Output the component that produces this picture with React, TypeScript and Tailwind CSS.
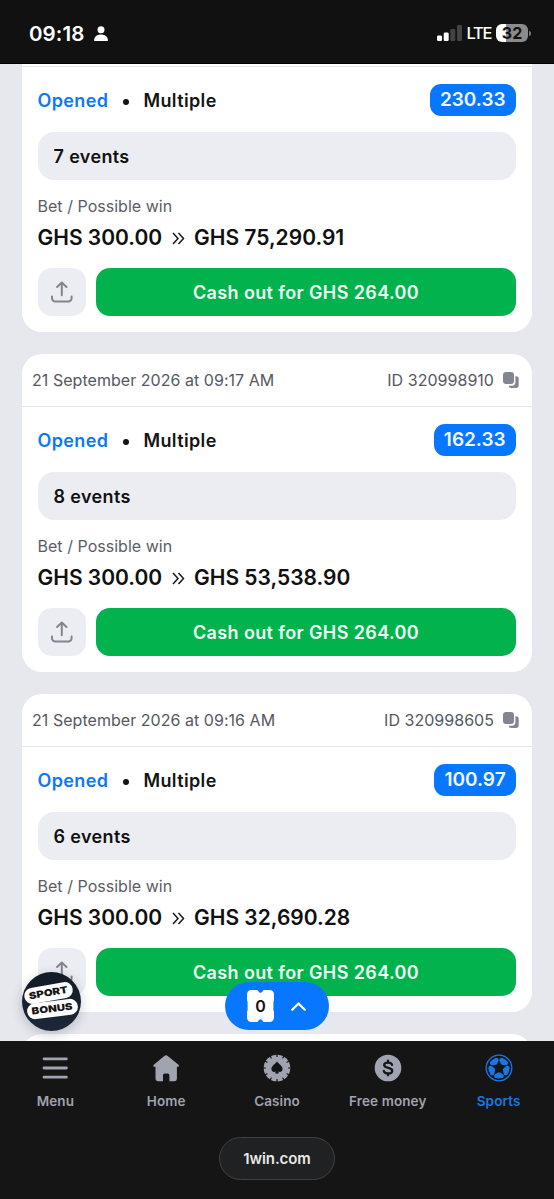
import type { ReactNode } from 'react';

type Bet = {
  date?: string;
  id?: string;
  odds: string;
  oddsWidth: string;
  events: string;
  win: string;
};

const bets: Bet[] = [
  { odds: '230.33', oddsWidth: 'w-[86.5px]', events: '7 events', win: 'GHS 75,290.91' },
  { date: '21 September 2026 at 09:17 AM', id: '320998910', odds: '162.33', oddsWidth: 'w-[82.5px]', events: '8 events', win: 'GHS 53,538.90' },
  { date: '21 September 2026 at 09:16 AM', id: '320998605', odds: '100.97', oddsWidth: 'w-[82px]', events: '6 events', win: 'GHS 32,690.28' },
];

function CopyIcon() {
  return (
    <svg className="h-4 w-4" viewBox="0 0 16 16" fill="#838691">
      <rect x="0" y="0" width="11" height="12" rx="3" />
      <path d="M12.4 4.2H13a2.7 2.7 0 0 1 2.7 2.7v6.4A2.7 2.7 0 0 1 13 16H8.2a2.7 2.7 0 0 1-2.6-2.3h3.2a3.6 3.6 0 0 0 3.6-3.6z" />
    </svg>
  );
}

function ShareIcon() {
  return (
    <svg className="h-6 w-6" viewBox="0 0 24 24" fill="none" stroke="#82848f" strokeWidth="2" strokeLinecap="round" strokeLinejoin="round">
      <path d="M11.8 15.2V2.800M7.100 7 11.800 2.500 16.500 7M2 16.400v1.800a3.300 3.300 0 0 0 3.300 3.300h13a3.300 3.300 0 0 0 3.300-3.300v-1.800" />
    </svg>
  );
}

function BetCard({ bet }: { bet: Bet }) {
  return (
    <article className={`${bet.id ? 'h-[318px]' : 'h-[268px]'} shrink-0 overflow-hidden bg-white ${bet.id ? 'rounded-[20px]' : 'rounded-b-[20px]'}`}>
      {bet.id ? (
        <header className="flex h-[53px] items-center justify-between border-b border-[#e6e7ec] pl-[10.5px] pr-[13.5px] text-[16px] text-[#55585f]">
          <span className="whitespace-nowrap tracking-[0.04px]">{bet.date}</span>
          <span className="flex items-center gap-[8.5px] whitespace-nowrap">
            <span className="tracking-[0.03px]">ID {bet.id}</span>
            <CopyIcon />
          </span>
        </header>
      ) : (
        <div className="h-[3px] border-b border-[#e6e7ec]" />
      )}
      <div className="px-4 pt-[17px]">
        <div className="flex h-8 items-center justify-between">
          <div className="mt-px flex items-center text-[18px] font-semibold tracking-[0.36px] text-[#141414]">
            <span className="w-[70px] text-[#0d77f5]">Opened</span>
            <span className="ml-[15px] mr-[15px] mt-0.5 h-1.5 w-1.5 rounded-full bg-[#141414]" />
            <span>Multiple</span>
          </div>
          <span className={`${bet.oddsWidth} flex h-8 items-center justify-center rounded-[11px] bg-[#0877ff] text-[19px] font-semibold text-[#f2f7ff]`}>{bet.odds}</span>
        </div>
        <div className="mt-4 flex h-12 items-center rounded-[16px] bg-[#ecedf2] px-4 text-[18px] font-semibold tracking-[0.36px] text-[#111]">{bet.events}</div>
        <p className="mt-[15px] h-[22px] whitespace-nowrap text-[16px] leading-[22px] tracking-[0.03px] text-[#5b5d64]">Bet / Possible win</p>
        <div className="mt-[7px] flex h-7 items-center whitespace-nowrap text-[21px] font-semibold text-[#101010]">
          <span className="w-[125px]">GHS 300.00</span>
          <svg className="ml-[9px] mr-[9.5px] h-[13px] w-[13px]" viewBox="0 0 13 13" fill="none" stroke="#18191b" strokeWidth="1.5">
            <path d="m1 1 5 5.5-5 5.5M6.5 1l5 5.5-5 5.5" />
          </svg>
          <span>{bet.win}</span>
        </div>
        <div className="mt-4 flex gap-[10.5px]">
          <button className="flex h-12 w-12 items-center justify-center rounded-[14px] bg-[#ecedf2]"><ShareIcon /></button>
          <button className="h-12 flex-1 rounded-[14px] bg-[#02b34d] text-[18px] font-semibold tracking-[0.38px] text-[#f0fff5]">Cash out for GHS 264.00</button>
        </div>
      </div>
    </article>
  );
}

function StatusBar() {
  return (
    <div className="z-10 flex h-16 shrink-0 items-center justify-between border-b border-black bg-[#111] pl-[29px] pr-[23px] pt-[3px] text-white">
      <div className="flex items-center gap-[7px]">
        <span className="w-[58px] pt-px text-[20.5px] font-semibold leading-6 tracking-[0.1px]">09:18</span>
        <svg className="h-[15px] w-[14px]" viewBox="0 0 14 15" fill="white">
          <circle cx="7" cy="3.7" r="3.5" />
          <path d="M0 14.2C.4 10.5 3 8.4 7 8.4s6.6 2.1 7 5.8c0 .5-.3.8-.8.8H.8c-.5 0-.8-.3-.8-.8Z" />
        </svg>
      </div>
      <div className="flex items-center">
        <svg className="h-4 w-[25px]" viewBox="0 0 25 16">
          <rect x="0" y="10.5" width="5" height="5.5" rx="1.3" fill="white" />
          <rect x="6.7" y="7.5" width="5" height="8.5" rx="1.3" fill="white" />
          <rect x="13.3" y="4" width="5" height="12" rx="1.3" fill="#434345" />
          <rect x="20" y="0" width="5" height="16" rx="1.3" fill="#434345" />
        </svg>
        <span className="ml-[4.5px] w-[25px] whitespace-nowrap text-[16.5px] font-medium leading-5 tracking-[-1.3px]">LTE</span>
        <div className="ml-[4.5px] flex h-[18px] w-8 items-center justify-center rounded-[6px] bg-linear-to-r from-white from-32% to-[#8b8b8d] to-32% text-[16px] font-bold leading-[18px] text-[#111]">32</div>
        <span className="ml-px h-[5px] w-[2px] rounded-r-full bg-[#77777a]" />
      </div>
    </div>
  );
}

function MenuIcon() {
  return (
    <svg className="h-7 w-7" viewBox="0 0 28 28" stroke="currentColor" strokeWidth="2.8" strokeLinecap="round">
      <path d="M3 4.8h22.4M3 14h22.4M3 23.2h22.4" />
    </svg>
  );
}

function HomeIcon() {
  return (
    <svg className="h-7 w-7" viewBox="0 0 28 28" fill="currentColor">
      <path d="M12.3 1.9a2.7 2.7 0 0 1 3.4 0l10.8 8.9c.7.6.7 1.2.2 1.7-.5.6-1.2.5-1.8.1v11.9a2.8 2.8 0 0 1-2.8 2.8h-4.7v-6a1.8 1.8 0 0 0-1.8-1.8h-2.8a1.8 1.8 0 0 0-1.8 1.8v6H6.3a2.8 2.8 0 0 1-2.8-2.8V12.6c-.7.4-1.4.5-1.9-.1-.5-.5-.5-1.1.2-1.7z" />
    </svg>
  );
}

const notches = [0, 30, 60, 90, 120, 150, 180, 210, 240, 270, 300, 330];

function CasinoIcon() {
  return (
    <svg className="h-7 w-7" viewBox="0 0 28 28">
      <circle cx="14" cy="14" r="13.3" fill="currentColor" />
      {notches.map((angle) => (
        <rect key={angle} x="13.4" y="0" width="1.2" height="3" rx="0.6" fill="#151515" transform={`rotate(${angle} 14 14)`} />
      ))}
      <path d="M14 7.6c1.2 2 5.6 4.3 5.6 7.5 0 2.4-2.4 3.7-4.4 2.5l.6 1.2c.2.4 0 .7-.4.7h-2.8c-.4 0-.6-.3-.4-.7l.6-1.2c-2 1.2-4.4-.1-4.4-2.5 0-3.2 4.4-5.5 5.6-7.5Z" fill="#151515" />
    </svg>
  );
}

function MoneyIcon() {
  return (
    <svg className="h-7 w-7" viewBox="0 0 28 28">
      <circle cx="14" cy="14" r="13.3" fill="currentColor" />
      <path d="M18 10.8c-.4-1.4-1.8-2.2-4-2.2-2.3 0-3.8.9-3.8 2.5 0 3.9 8 1.8 8 5.6 0 1.7-1.7 2.8-4.1 2.8-2.3 0-3.9-1-4.3-2.5M14 6.7v1.6M14 19.7v1.6" fill="none" stroke="#151515" strokeWidth="2.3" strokeLinecap="round" />
    </svg>
  );
}

const panels = [0, 72, 144, 216, 288];

function BallIcon() {
  return (
    <svg className="h-7 w-7" viewBox="0 0 28 28">
      <circle cx="14" cy="14" r="12.8" fill="none" stroke="currentColor" strokeWidth="1.3" />
      {panels.map((angle) => (
        <path key={angle} d="m12.6 9.3-2.7-1.700c-.700-.500-.900-1.100-.700-1.900l.200-.700c.200-.700.600-1 1.300-1.100a12 12 0 0 1 6.600 0c.700.100 1.100.400 1.300 1.100l.200.700c.200.800 0 1.400-.700 1.900l-2.700 1.700c-1 .700-1.800.700-2.800 0Z" fill="currentColor" transform={`rotate(${angle + 36} 14 14)`} />
      ))}
      <path d="m14 9.5 4.400 3.200-1.700 5.100h-5.400l-1.700-5.100z" fill="#151515" />
    </svg>
  );
}

function Tab({ icon, label, active = false }: { icon: ReactNode; label: string; active?: boolean }) {
  return (
    <button className={`flex flex-1 flex-col items-center pt-[13px] ${active ? 'text-[#1678e8]' : 'text-[#a0a3b0]'}`}>
      {icon}
      <span className="mt-[8.5px] whitespace-nowrap text-[13.5px] font-semibold leading-5 tracking-[0.1px]">{label}</span>
    </button>
  );
}

function SportBonus() {
  return (
    <div className="absolute left-[21.5px] top-[971.5px] h-[59px] w-[59px] rounded-full bg-linear-to-b from-[#121b25] to-[#1c2839] shadow-[0_3px_12px_#27344040]">
      <div className="absolute left-[2.5px] top-[13px] flex h-[16px] w-[49px] rotate-[-10deg] items-center justify-center rounded-full bg-white">
        <span className="scale-x-[1.2] text-[9.5px] font-black leading-[12px] text-[#141414]">SPORT</span>
      </div>
      <div className="absolute left-[5px] top-[29px] flex h-[16px] w-[51px] rotate-[-7deg] items-center justify-center rounded-full bg-white">
        <span className="scale-x-[1.2] text-[9.5px] font-black leading-[12px] text-[#141414]">BONUS</span>
      </div>
    </div>
  );
}

function BetSlip() {
  return (
    <button className="absolute left-[225px] top-[982px] flex h-12 w-[104px] items-center rounded-full bg-[#0877ff] pl-[22px]">
      <span className="relative flex h-8 w-[27px] items-center justify-center">
        <svg className="absolute inset-0 h-8 w-[27px]" viewBox="0 0 27 32" fill="white">
          <path d="M4.5 0h5.3c1.5 0 1.8 2.8 3.7 2.8S15.7 0 17.2 0h5.3C25.4 0 27 1.8 27 4.5v5c0 1.2-.6 1.5-.6 3v7c0 1.5.6 1.8.6 3v5c0 2.7-1.6 4.5-4.5 4.5h-5.3c-1.5 0-1.8-2.8-3.7-2.8S11.3 32 9.8 32H4.5C1.6 32 0 30.2 0 27.5v-5c0-1.2.6-1.5.6-3v-7c0-1.5-.6-1.8-.6-3v-5C0 1.8 1.6 0 4.5 0Z" />
        </svg>
        <span className="relative text-[16px] font-semibold text-[#111]">0</span>
      </span>
      <svg className="ml-[17px] h-[9px] w-[15px]" viewBox="0 0 15 9" fill="none" stroke="white" strokeWidth="2.2" strokeLinecap="round" strokeLinejoin="round">
        <path d="m1.2 7.8 6.3-6.3 6.3 6.3" />
      </svg>
    </button>
  );
}

export default function App() {
  return (
    <div className="relative flex h-[1199px] w-[554px] flex-col overflow-hidden bg-[#e7e8ee] font-['Inter',sans-serif]">
      <StatusBar />
      <main className="h-[977px] shrink-0 overflow-hidden pl-[21.5px] pr-[22px]">
        <div className="flex flex-col gap-[22px]">
          {bets.map((bet) => <BetCard key={bet.odds} bet={bet} />)}
          <div className="h-[100px] rounded-[20px] bg-white" />
        </div>
      </main>
      <footer className="flex flex-1 flex-col items-center bg-[#151515]">
        <nav className="flex h-[78px] w-full">
          <Tab icon={<MenuIcon />} label="Menu" />
          <Tab icon={<HomeIcon />} label="Home" />
          <Tab icon={<CasinoIcon />} label="Casino" />
          <Tab icon={<MoneyIcon />} label="Free money" />
          <Tab icon={<BallIcon />} label="Sports" active />
        </nav>
        <div className="mt-[18px] flex h-[43px] w-[116px] items-center justify-center rounded-full border border-[#404143] bg-[#202123] pt-px text-[15px] font-semibold tracking-[-0.1px] text-[#e9e9e9]">1win.com</div>
      </footer>
      <SportBonus />
      <BetSlip />
    </div>
  );
}
